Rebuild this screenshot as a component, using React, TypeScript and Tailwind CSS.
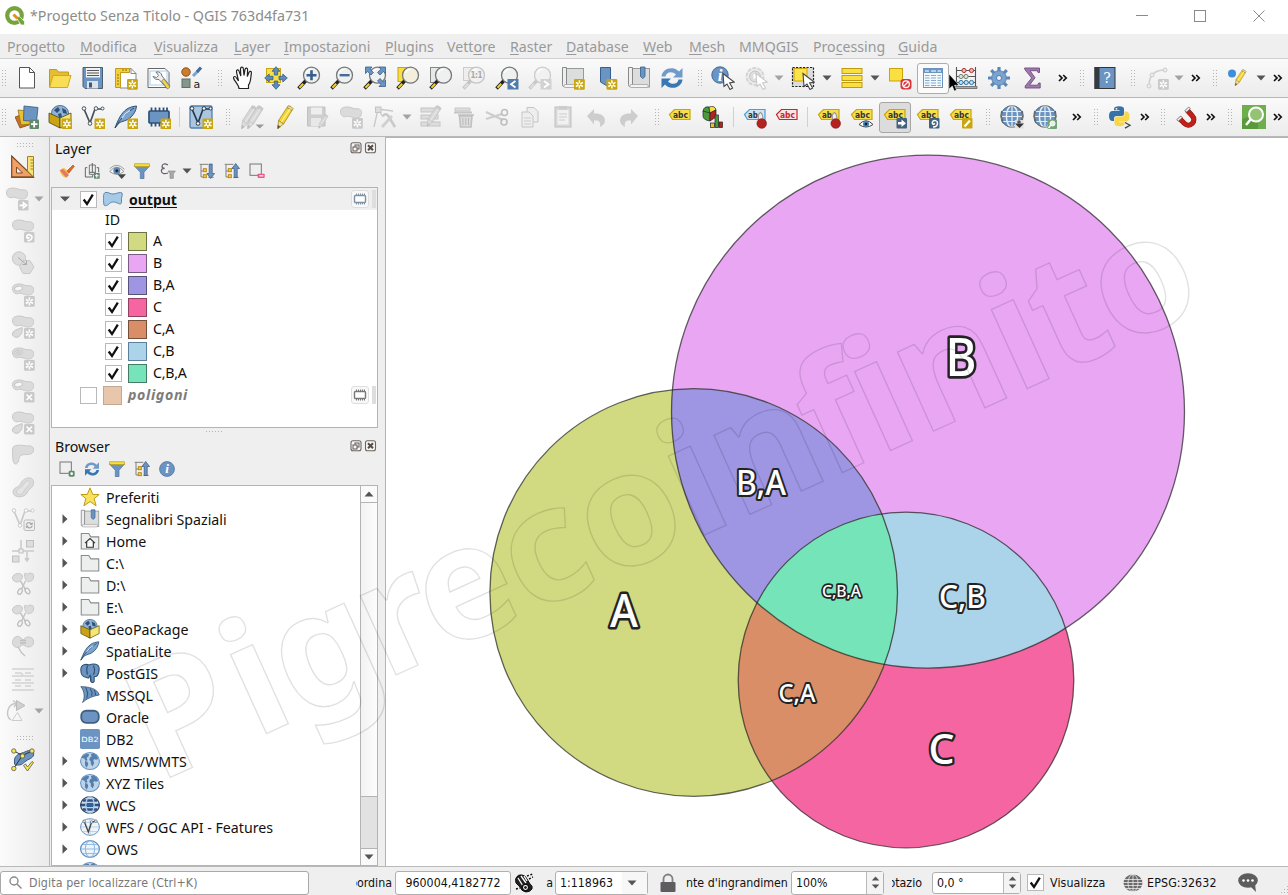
import React from 'react';

type Kids = { children?: React.ReactNode };

const Svg = ({ children, cls = 'h-6 w-6' }: Kids & { cls?: string }) => (
  <svg viewBox="0 0 24 24" className={`${cls} block shrink-0`} fill="none">
    {children}
  </svg>
);

const Cell = ({ children, cls = 'w-[33px]' }: Kids & { cls?: string }) => (
  <div className={`${cls} flex h-full shrink-0 items-center justify-center`}>{children}</div>
);

const Grip = ({ cls }: { cls: string }) => (
  <div className={`${cls} flex h-full shrink-0 items-center`}>
    <svg viewBox="0 0 5 17" className="block h-[17px] w-[5px]">
      {[0, 1, 2, 3, 4, 5].map((i) => (
        <g key={i} fill="#b4b4b4">
          <rect x="0" y={i * 3} width="1" height="1" />
          <rect x="3" y={i * 3} width="1" height="1" />
        </g>
      ))}
    </svg>
  </div>
);

const Sep = ({ cls }: { cls: string }) => (
  <div className={`${cls} flex h-full shrink-0 items-center justify-center`}>
    <div className="h-[20px] w-px bg-[#d0d0d0]" />
  </div>
);

const Arrow = ({ cls, dim }: { cls: string; dim?: boolean }) => (
  <Cell cls={cls}>
    <svg viewBox="0 0 10 6" className="block h-[6px] w-[10px]">
      <path d="M0.5 0.5h9L5 5.5z" fill={dim ? '#a3a3a3' : '#555'} />
    </svg>
  </Cell>
);

const More = ({ cls }: { cls: string }) => (
  <Cell cls={cls}>
    <svg viewBox="0 0 10 8" className="block h-[8px] w-[10px]" fill="none" stroke="#111" strokeWidth="1.7">
      <path d="M1 1l3 3-3 3M5.2 1l3 3-3 3" />
    </svg>
  </Cell>
);

const Star = ({ x = 13, y = 13, c = '#c9a50e' }: { x?: number; y?: number; c?: string }) => (
  <g transform={`translate(${x} ${y})`}>
    <rect width="10.8" height="10.8" rx="1.2" fill={c} />
    <path d="M5.4 1.3v8.2M1.8 3.3l7.200 4.200M9 3.300L1.800 7.500" stroke="#fff" strokeWidth="1.500" />
    <circle cx="5.4" cy="5.4" r="1.100" fill={c} />
  </g>
);

const Mag = ({ c = '#777', h = '#f2cf2a', o = '#222', f = '#eef1f0' }: { c?: string; h?: string; o?: string; f?: string }) => (
  <g>
    <path d="M1.500 22.500l8-8.500" stroke={o} strokeWidth="3.400" />
    <path d="M2.400 21.800l3.800-4" stroke={h} strokeWidth="2" />
    <circle cx="14.500" cy="9.200" r="8" fill={f} stroke={c} strokeWidth="1.300" />
    <path d="M9.500 7a5.500 5.500 0 0 1 5-3.600" stroke="#fff" strokeWidth="1.300" />
  </g>
);

const Globe = ({ a = '#6b94c2', b = '#e4eef7', s = '#41627f' }: { a?: string; b?: string; s?: string }) => (
  <g stroke={s} strokeWidth="0.9">
    <circle cx="12" cy="11.500" r="10.800" fill={a} />
    <path d="M12 1v21.500M2.500 6.500h19M1.500 11.500h21M2.500 16.500h19" stroke={b} strokeWidth="1.200" />
    <ellipse cx="12" cy="11.500" rx="5.600" ry="10.800" stroke={b} strokeWidth="1.500" />
    <path d="M2 6Q0 12 3 18M22 6q2 6-1 12" stroke="#555" strokeWidth="1.500" />
    <circle cx="12" cy="11.500" r="10.800" stroke="#777" />
  </g>
);

const World = ({ s = '#6b94c2' }: { s?: string }) => (
  <g>
    <ellipse cx="12" cy="12" rx="11.300" ry="10.300" fill="#bcd4ea" stroke={s} strokeWidth="1.300" />
    <path
      d="M3 6l5-3 3 1-1 3-2 1 1 3-2 1-2-3-3-1zM6 12l3 1 1 3-2 4-2-3zM13 4l3-1.500 4 3 2 4-3 1-2-1-1 2 1 3-2 4-2-3 0-3-2-2 1-3 2-1z"
      fill="#5580ae"
    />
  </g>
);

const Tag = ({ f = '#f7df4b', s = '#c9a50e', t = '#333', w = 'abc' }: { f?: string; s?: string; t?: string; w?: string }) => (
  <g>
    <path d="M1.500 9.500L6.500 4.500h15.500v10H4.500z" fill={f} stroke={s} strokeWidth="1.200" />
    <text x="5" y="12.600" textLength={w.length * 5} lengthAdjust="spacingAndGlyphs" className="font-['DejaVu_Sans'] text-[9px] font-bold" fill={t}>
      {w}
    </text>
  </g>
);

const Ptr = ({ dim }: { dim?: boolean }) => (
  <path d="M12 7.500l1 13 3-2.500 3 5.500 2.600-1.400-3-5.200 4.600-.8z" fill="#fff" stroke={dim ? '#c9c9c9' : '#444'} strokeWidth="1.100" />
);

const Pin = () => (
  <g>
    <path d="M15.500 14q-1-5 2-6.500 2.500 1.500 2.500 7" fill="#eee" stroke="#999" strokeWidth="1.100" />
    <circle cx="18.700" cy="18.500" r="4.800" fill="#b52222" stroke="#7c1414" strokeWidth=".6" />
  </g>
);

const Refresh = ({ c = '#6f9bcb', d = '#3877b5' }: { c?: string; d?: string }) => (
  <g>
    <path d="M1.500 10.500C2 4.500 8 1 14 2.500c2 .5 3.500 1.500 5 3L22.500 2v9.500H13l3-3C12 4.500 6 6 5.500 10.500z" fill={c} />
    <path d="M22.500 13.500C22 19.500 16 23 10 21.500c-2-.5-3.500-1.500-5-3L1.500 22v-9.500H11l-3 3c4 4 10 2.500 10.500-2z" fill={d} />
  </g>
);

const Polyline = ({ c = '#45505c', n = '#fff' }: { c?: string; n?: string }) => (
  <g stroke={c}>
    <path d="M3 4l6 14 5-14h7" strokeWidth="1.700" />
    <g fill={n} strokeWidth="1">
      <circle cx="3" cy="3.500" r="1.800" />
      <circle cx="9" cy="18.500" r="1.800" />
      <circle cx="15" cy="3.500" r="1.800" />
      <circle cx="21.500" cy="3.500" r="1.500" />
    </g>
  </g>
);

const Pencil = ({ g }: { g?: boolean }) => (
  <g stroke={g ? '#c4c4c4' : '#a08a20'} strokeWidth=".8">
    <path d="M5.500 15.500L14 2.500l5 3L10.500 19z" fill={g ? '#d6d6d6' : '#f3d32f'} />
    <path d="M14 2.500l1.200-1.800q3 0 5 3L19 5.500z" fill={g ? '#cacaca' : '#e8d5a0'} />
    <path d="M5.500 15.500l5 3.500-5.500 4.500z" fill={g ? '#ddd' : '#f0dcae'} />
    <path d="M4.500 23.700l.3-3.500 2.600 1.600z" fill={g ? '#bbb' : '#333'} />
    <path d="M8.300 17L17 4" stroke={g ? '#e8e8e8' : '#fff2a0'} strokeWidth="1.300" />
  </g>
);

const Feather = () => (
  <g>
    <path d="M1 23C4 15 7 8 13 4c3-2 6-2.500 9.500-3C22 6 20 9 17 12c-4 4-9 4-12 6z" fill="#7ba3cf" stroke="#2f4f72" strokeWidth="1" />
    <path d="M1 23C6 14 12 8 20 3" stroke="#2f4f72" strokeWidth="1" />
    <path d="M8 13q3-5 8-7.500" stroke="#d7e6f4" strokeWidth="1.200" />
  </g>
);

const Box = () => (
  <g>
    <ellipse cx="12" cy="8" rx="8.500" ry="7.500" fill="#8fb3d8" stroke="#39597a" strokeWidth=".8" />
    <path d="M6 5l4-3 2 3-3 3zM14 3l4 2 1 4-4-1zM10 9l3-1 1 4-3 1z" fill="#2f4f78" />
    <path d="M1 8l11 5v10L1 17.500z" fill="#caa313" stroke="#4d430f" strokeWidth=".8" />
    <path d="M23 8l-11 5v10l11-5.500z" fill="#f5e572" stroke="#4d430f" strokeWidth=".8" />
  </g>
);

const Book = ({ mark }: { mark?: boolean }) => (
  <g>
    <rect x="5.500" y="2.500" width="17" height="18.500" fill="#dcdddd" stroke="#999" />
    <path d="M1.500 1.500h4v19h-3q-1 0-1-2z" fill="#eee" stroke="#888" />
    <rect x="3" y="18.500" width="18" height="3" rx="1" fill="#f3f3f3" stroke="#999" strokeWidth=".7" />
    {mark && <path d="M13.500 1h4.500v9.500l-2.200 2-2.300-2z" fill="#6b94c2" stroke="#355f8c" strokeWidth=".8" />}
  </g>
);

const Blob = ({ y = 0, hole }: { y?: number; hole?: boolean }) => (
  <g transform={`translate(0 ${y})`}>
    <path
      d="M1.500 6C1 2 5 .8 9 1c3 0 5 2 8 1.800 4-.3 6 1.200 5.500 4.700-.4 4-4 5-7 4.500-3-.5-5-2.500-8-1.500C4 11.500 2 9.500 1.500 6z"
      fill="#dadbda"
      stroke="#c8c9c8"
      strokeWidth="1"
    />
    {hole && <ellipse cx="7.500" cy="5.500" rx="4" ry="2.300" fill="#f8f8f8" stroke="#c4c5c4" transform="rotate(-12 7.500 5.500)" />}
  </g>
);

const GBadge = ({ d }: { d: string }) => (
  <g>
    <rect x="13" y="13" width="10.500" height="10.500" rx="1.500" fill="#c9c9c9" />
    <path d={d} stroke="#fff" strokeWidth="1.700" />
  </g>
);

const Folder = ({ home }: { home?: boolean }) => (
  <g>
    <path d="M1.500 3h9l2.500 4h9.500v14.500H1.500z" fill="#edeeee" stroke="#8b8b8b" strokeWidth="1.300" />
    {home && <path d="M6 14.500l6-5.500 6 5.500M8 13.500v6h8v-6" fill="#fff" stroke="#333" strokeWidth="1.400" />}
  </g>
);

const Chip = ({ c = '#5b6f86', f = '#fff' }: { c?: string; f?: string }) => (
  <g stroke={c}>
    <path d="M4.500 2.500v19M8.500 2.500v19M12.500 2.500v19M16.500 2.500v19M20 2.500v19" strokeWidth="1.800" />
    <rect x="2" y="6" width="20" height="12" rx="1" fill={f} strokeWidth="1.700" />
  </g>
);

const Funnel = () => (
  <g>
    <path d="M1 5h22l-8 9v9.500H9.500V14z" fill="#6b94c2" stroke="#4a719e" strokeWidth="1" />
    <rect x="1" y="1.200" width="22" height="4.300" fill="#f5e03a" stroke="#b0981a" />
  </g>
);

const Tree = ({ up }: { up?: boolean }) => (
  <g>
    <path d="M1 2h13M3 2V21h3M3 12h3M14 21.500h8" stroke="#808080" strokeWidth="1.500" />
    <rect x="6.500" y="8.500" width="4.500" height="4.500" fill="#f7c93b" stroke="#b8860f" strokeWidth="1.400" />
    <rect x="6.500" y="17.500" width="4.500" height="4.500" fill="#f7c93b" stroke="#b8860f" strokeWidth="1.400" />
    {up ? (
      <path d="M17.500 .8l5.800 7.500H19.800v13.500h-4.500V8.300h-3.500z" fill="#6b94c2" stroke="#2f5078" />
    ) : (
      <path d="M17.500 23.200l5.800-7.500H19.800V1.500h-4.500v14.200h-3.500z" fill="#6b94c2" stroke="#2f5078" />
    )}
  </g>
);

const Info = () => (
  <g>
    <circle cx="12" cy="12" r="11.200" fill="#6b94c2" stroke="#41699b" />
    <text x="12" y="18.500" textAnchor="middle" className="font-['Liberation_Serif'] text-[20px] font-bold italic" fill="#fff">
      i
    </text>
  </g>
);

const MainBar = () => (
  <div className="flex h-[38px] items-center bg-linear-to-b from-[#fafafa] to-[#ececec]">
    <Grip cls="w-[10px] pl-[2px]" />
    <Cell>
      <Svg><path d="M4.500 1.500h10l5 5v15.500h-15z" fill="#fff" stroke="#555" /><path d="M14.500 1.500v5h5" stroke="#555" /></Svg>
    </Cell>
    <Cell>
      <Svg>
        <path d="M1.500 21V3.500h7l2 2.500h10v5" fill="#e5bd33" stroke="#c39a1a" />
        <path d="M1.500 21.500l3.500-12h18l-3.500 12z" fill="#f9de55" stroke="#d0a71f" />
      </Svg>
    </Cell>
    <Cell>
      <Svg>
        <path d="M2 1.500h19.500v21H4l-2-2z" fill="#6b94c2" stroke="#4c5d70" />
        <rect x="5" y="2" width="14" height="9.500" fill="#f0f1f1" />
        <path d="M6 4.500h12M6 7h12M6 9.500h12" stroke="#555" />
        <rect x="6" y="15" width="11" height="7.500" fill="#dfe2e4" /><rect x="8" y="16.500" width="3" height="5" fill="#3d5a7a" />
      </Svg>
    </Cell>
    <Cell>
      <Svg>
        <path d="M6 2.500h11l5 5V22H6z" fill="#fff" stroke="#888" />
        <path d="M17 2.500v5h5" stroke="#888" />
        <path d="M1.500 2.500h14v4h-9v15h-5z" fill="#f4cf3c" stroke="#c39a1a" />
        <path d="M3 9h2M3 12h2M3 15h2M3 18h2M9 3v2M12 3v2" stroke="#8c6d0e" />
        <Star />
      </Svg>
    </Cell>
    <Cell>
      <Svg>
        <path d="M1 2.500h17l4 4V21.500H1z" fill="#fff" stroke="#666" />
        <rect x="3" y="5" width="17" height="14" stroke="#a9cdea" />
        <path d="M9 6q5-1 6 4l8 10-3 2.500-8-9q-4 1-6-3l3.500 1 2-2z" fill="#eee" stroke="#777" />
        <path d="M14.500 15l2.500-2 6 8-2.500 2z" fill="#f4d83c" stroke="#777" strokeWidth=".7" />
      </Svg>
    </Cell>
    <Cell>
      <Svg>
        <circle cx="6" cy="6" r="4.200" fill="#cf7c2e" stroke="#875018" />
        <path d="M13 10l5-5" stroke="#7ba3cf" strokeWidth="3" /><path d="M17 6l4-4.500" stroke="#456d98" strokeWidth="3.200" />
        <rect x="2" y="13" width="8" height="8.500" fill="#84978d" stroke="#5f6f67" />
        <text x="13.500" y="22" className="font-['DejaVu_Sans'] text-[11px]" fill="#222">a</text>
      </Svg>
    </Cell>
    <Grip cls="w-[18px] pl-[10px]" />
    <Cell>
      <Svg>
        <path
          d="M8 22.500c0-4-4.500-7-5.500-10.500 0-2 2-2 3 0l2 3L5.500 6c-.4-2.500 2-3 2.600-.8L9.800 10 9.500 3c0-2.500 2.700-2.500 2.900 0l.6 6.500L14 3.500c.4-2.200 2.800-1.800 2.600.5l-.3 6.500 1.600-4c.8-2 2.800-1.200 2.500.6C19.500 12 20 16 17.500 19v3.500z"
          fill="#fff"
          stroke="#222"
          strokeWidth="1.200"
        />
      </Svg>
    </Cell>
    <Cell>
      <Svg>
        <rect x="2.500" y="2.500" width="14" height="14" fill="#f9df3f" stroke="#caa313" />
        <g fill="#5f8bbb" stroke="#355f8c" strokeWidth=".8">
          <path d="M12 .7l4 4.500h-2.300V9h-3.400V5.200H8zM12 23.300l4-4.500h-2.300V15h-3.400v3.800H8zM.7 12l4.500 4v-2.300H9v-3.400H5.200V8zM23.300 12l-4.500 4v-2.300H15v-3.400h3.800V8z" />
        </g>
      </Svg>
    </Cell>
    <Cell><Svg><Mag /><path d="M14.500 4.200v10M9.500 9.200h10" stroke="#355f8c" strokeWidth="2.600" /></Svg></Cell>
    <Cell><Svg><Mag /><path d="M9.600 9.200h10" stroke="#456d98" strokeWidth="2.400" /></Svg></Cell>
    <Cell>
      <Svg>
        <Mag />
        <g fill="#6b94c2" stroke="#355f8c" strokeWidth=".8">
          <path d="M2.500 1h6.500L7 3.200 10.500 6.500 8 9 4.700 5.500 2.500 7.500zM22.500 1H16l2 2.200-3.500 3.300L17 9l3.300-3.500 2.200 2zM22.500 20.500H16l2-2.200-3.500-3.300L17 12.500l3.300 3.500 2.200-2z" />
        </g>
      </Svg>
    </Cell>
    <Cell>
      <Svg><rect x="2" y="1.500" width="12" height="14" fill="#f9df3f" stroke="#caa313" /><Mag f="#f3efdc" /></Svg>
    </Cell>
    <Cell><Svg><rect x="1.500" y="1.500" width="12" height="15" fill="#e8e8e8" stroke="#888" /><Mag /></Svg></Cell>
    <Cell>
      <Svg>
        <rect x="1.500" y="1.500" width="12" height="13" fill="#eee" stroke="#ccc" />
        <Mag c="#c4c4c4" h="#ddd" o="#c4c4c4" f="#f1f1f1" />
        <text x="8.500" y="12" textLength="12" className="font-['DejaVu_Sans_Condensed'] text-[8px] font-bold" fill="#a8a8a8">1:1</text>
      </Svg>
    </Cell>
    <Cell>
      <Svg><Mag /><rect x="12.500" y="13" width="11" height="10.500" fill="#4f7cad" /><path d="M20.500 15l-4.500 3.300 4.500 3.300" stroke="#fff" strokeWidth="1.800" /></Svg>
    </Cell>
    <Cell>
      <Svg><Mag c="#ccc" h="#ddd" o="#c8c8c8" f="#f1f1f1" /><rect x="12.500" y="13" width="11" height="10.500" fill="#d2d2d2" /><path d="M16 15l4.500 3.300-4.500 3.300" stroke="#fff" strokeWidth="1.800" /></Svg>
    </Cell>
    <Cell><Svg><Book /><Star /></Svg></Cell>
    <Cell><Svg><path d="M6.500 1.500h10V21l-5-2-5-3z" fill="#6b94c2" stroke="#355f8c" /><Star x={12.5} /></Svg></Cell>
    <Cell><Svg><Book mark /></Svg></Cell>
    <Cell><Svg><Refresh /></Svg></Cell>
    <Grip cls="w-[18px] pl-[10px]" />
    <Cell>
      <Svg>
        <circle cx="9" cy="9" r="8.200" fill="#6b94c2" stroke="#41699b" />
        <text x="9" y="14.500" textAnchor="middle" className="font-['Liberation_Serif'] text-[17px] font-bold italic" fill="#fff">i</text>
        <Ptr />
      </Svg>
    </Cell>
    <Cell>
      <Svg>
        <circle cx="11" cy="10.500" r="8.500" fill="#ececec" stroke="#d4d4d4" strokeWidth="2" strokeDasharray="4 1.300" />
        <circle cx="11" cy="10.500" r="5.500" fill="#ddd" stroke="#c4c4c4" /><path d="M9.500 7.500v6l4.500-3z" fill="#fff" /><Ptr dim />
      </Svg>
    </Cell>
    <Arrow cls="w-[14px]" dim />
    <Cell>
      <Svg>
        <rect x="1.500" y="1.500" width="21" height="19" fill="#dcdcdc" stroke="#222" strokeWidth="1.200" strokeDasharray="2.200 1.300" />
        <rect x="3" y="2.500" width="13" height="12.500" fill="#fbe34a" stroke="#caa313" /><Ptr />
      </Svg>
    </Cell>
    <Arrow cls="w-[16px]" />
    <Cell>
      <Svg>
        <g fill="#f9df3f" stroke="#c09a10"><rect x="2" y="2.500" width="20" height="5" /><rect x="2" y="9.500" width="20" height="5" /><rect x="2" y="16.500" width="20" height="5" /></g>
      </Svg>
    </Cell>
    <Arrow cls="w-[14px]" />
    <Cell cls="w-[34px] pl-[2px]">
      <Svg>
        <rect x="1.500" y="2.500" width="13" height="12.500" fill="#f9df3f" stroke="#caa313" />
        <rect x="12.500" y="13" width="11" height="10.500" rx="3" fill="#d8343a" /><circle cx="18" cy="18.200" r="3.300" stroke="#fff" strokeWidth="1.300" /><path d="M15.500 20.500l5-5" stroke="#fff" strokeWidth="1.300" />
      </Svg>
    </Cell>
    <Cell>
      <div className="flex h-[31px] w-[32px] shrink-0 items-center justify-center rounded-[3px] border border-[#adadad] bg-[#fbfbfb]">
        <Svg>
          <rect x="2.500" y="2.500" width="19" height="19" fill="#f3f8fc" stroke="#6b94c2" /><rect x="3" y="3" width="18" height="4" fill="#6b94c2" />
          <path d="M4 9.500h4.500M10 9.500h5M16.500 9.500H20M4 12h4.500M10 12h5M16.500 12H20M4 14.500h4.500M10 14.500h5M16.500 14.500H20M4 17h4.500M10 17h5M16.500 17H20M4 19.500h4.500M10 19.500h5M16.500 19.500H20" stroke="#86abd0" strokeWidth="1.200" /><path d="M4 5h4M10 5h5M16.500 5H20" stroke="#cfe3f4" strokeWidth="1.300" />
        </Svg>
      </div>
    </Cell>
    <Cell>
      <Svg>
        <path d="M2.500 1v19M21.500 1v19M2 4.500h20M2 10.500h20M2 16.500h20" stroke="#555" strokeWidth="1.100" /><path d="M1 20.500h22v2H1z" fill="#aaa" stroke="#555" strokeWidth=".7" />
        <g fill="#f3b1b1" stroke="#b03232"><circle cx="10" cy="4.500" r="2.100" /><circle cx="17.500" cy="4.500" r="2.100" /></g>
        <g fill="#dde4dd" stroke="#718071"><circle cx="7" cy="10.500" r="2.100" /><circle cx="12" cy="10.500" r="2.100" /></g>
        <g fill="#bfe0f4" stroke="#2f75a5"><circle cx="7" cy="16.500" r="2.100" /><circle cx="12.200" cy="16.500" r="2.100" /><circle cx="17.500" cy="16.500" r="2.100" /></g>
      </Svg>
    </Cell>
    <Cell>
      <Svg>
        <path d="M12 1v22M1 12h22M4.200 4.200l15.600 15.600M19.800 4.200L4.200 19.800" stroke="#5b88b8" strokeWidth="3.200" /><circle cx="12" cy="12" r="7.300" fill="#7ba3cf" stroke="#5b88b8" /><circle cx="12" cy="12" r="2.500" fill="#f4f4f4" stroke="#4f7cad" />
      </Svg>
    </Cell>
    <Cell>
      <Svg><path d="M4.500 2h15v4.500h-1.500l-.8-1.800H10l5 7-5.500 7.500h8l1.200-2.200h1.500V22h-15v-2l6.500-8-6.500-8z" fill="#a07aae" stroke="#6d4d7b" strokeWidth=".9" /></Svg>
    </Cell>
    <More cls="w-[29px]" />
    <Grip cls="w-[11px] pl-[3px]" />
    <Cell>
      <Svg>
        <rect x="2" y="1.500" width="20" height="21" fill="#6b94c2" stroke="#333" /><rect x="1.500" y="1" width="5" height="22" fill="#343a42" />
        <text x="14" y="17" textAnchor="middle" className="font-['DejaVu_Serif'] text-[14px]" fill="#fff">?</text>
      </Svg>
    </Cell>
    <Grip cls="w-[19px] pl-[10px]" />
    <Cell>
      <Svg>
        <path d="M4 20C4 9 9 4 20 4" stroke="#d0d0d0" strokeWidth="1.500" />
        <g fill="#eee" stroke="#ccc"><circle cx="4" cy="20" r="2" /><circle cx="7" cy="9" r="2" /><circle cx="20" cy="4" r="2" /></g><Star c="#c9c9c9" />
      </Svg>
    </Cell>
    <Arrow cls="w-[12px]" dim />
    <More cls="w-[22px]" />
    <Grip cls="w-[14px] pl-[6px]" />
    <Cell>
      <Svg>
        <circle cx="6" cy="7.500" r="4" fill="#3f8fd8" /><g transform="translate(6 3) scale(.7)"><Pencil /></g>
      </Svg>
    </Cell>
    <Arrow cls="w-[14px]" />
    <More cls="w-[20px]" />
  </div>
);

const EditBar = () => (
  <div className="flex h-[38px] items-center bg-linear-to-b from-[#fafafa] to-[#ececec]">
    <Grip cls="w-[10px] pl-[2px]" />
    <Cell>
      <Svg>
        <path d="M0 12l11-4 3 12-9 3z" fill="#c96f28" stroke="#8d4e16" strokeWidth=".8" /><path d="M3 5l12 1 1 13-10 1z" fill="#eac033" stroke="#8d7216" strokeWidth=".8" />
        <path d="M9 1l14 1.500-1.500 14-13-1z" fill="#6b94c2" stroke="#39597a" strokeWidth=".8" />
        <rect x="14.500" y="14.500" width="9.500" height="9.500" rx="1" fill="#61876c" /><path d="M19.200 16v6.500M16 19.200h6.500" stroke="#fff" strokeWidth="1.800" />
      </Svg>
    </Cell>
    <Cell><Svg><Box /><Star x={13.5} y={13.5} /></Svg></Cell>
    <Cell><Svg><Polyline /><Star x={13.5} y={13.5} /></Svg></Cell>
    <Cell><Svg><Feather /><Star x={13.5} y={13.5} /></Svg></Cell>
    <Cell><Svg><Chip c="#2f5078" f="#6b94c2" /><Star x={13.5} y={13.5} /></Svg></Cell>
    <Sep cls="w-[9px]" />
    <Cell>
      <Svg><rect x="1" y="1" width="22" height="22" rx="1.500" fill="#a9c5e0" stroke="#5580ae" strokeWidth="1.300" /><Polyline c="#26384a" /><Star x={13.5} y={13.5} /></Svg>
    </Cell>
    <Grip cls="w-[18px] pl-[9px]" />
    <Cell>
      <Svg><g transform="translate(-3 0)"><Pencil g /></g><g transform="translate(3 0)"><Pencil g /></g><path d="M15.500 19.500h8.500l-4.200 4z" fill="#999" /></Svg>
    </Cell>
    <Cell><Svg><Pencil /></Svg></Cell>
    <Cell>
      <Svg><path d="M1.500 2h17.500v19H1.500z" fill="#cfcfcf" stroke="#c0c0c0" /><rect x="5" y="2.500" width="11" height="7" fill="#eee" /><rect x="5" y="13" width="10" height="8" fill="#e8e8e8" /><g transform="translate(10 9) scale(.6)"><Pencil g /></g></Svg>
    </Cell>
    <Cell><Svg><Blob y={1} /><Star c="#c9c9c9" /></Svg></Cell>
    <Cell>
      <Svg><path d="M2 22L6 4l15 2M6 4l5 8" stroke="#c8c8c8" strokeWidth="1.300" /><rect x="3.500" y="2" width="5.500" height="5.500" fill="#ddd" stroke="#c4c4c4" /><path d="M11 11q3-4 6 1l6 10" stroke="#c9c9c9" strokeWidth="2.600" /><path d="M20 11L10 22" stroke="#d0d0d0" strokeWidth="2.800" /></Svg>
    </Cell>
    <Arrow cls="w-[14px]" dim />
    <Cell>
      <Svg><g fill="#ddd" stroke="#c4c4c4"><rect x="2" y="3" width="17" height="4" /><rect x="2" y="10" width="17" height="4" /><rect x="2" y="17" width="19" height="4" /></g><g transform="translate(4 0) scale(.9)"><Pencil g /></g></Svg>
    </Cell>
    <Cell>
      <Svg><path d="M3 3h15v3H3z" fill="#ddd" stroke="#c8c8c8" /><path d="M2 7.500h18" stroke="#c4c4c4" strokeWidth="2" /><path d="M6 10h16M7.500 11l1 11h10.500l1-11z" fill="#dcdcdc" stroke="#c0c0c0" strokeWidth="1.600" /><path d="M11 13v7M13.800 13v7M16.500 13v7" stroke="#bbb" /></Svg>
    </Cell>
    <Cell>
      <Svg><path d="M1 7l17 8M1 14l16-5" stroke="#cdcdcd" strokeWidth="2.200" /><circle cx="19.500" cy="7.500" r="3" stroke="#bdbdbd" strokeWidth="1.500" /><circle cx="19" cy="17" r="3" stroke="#bdbdbd" strokeWidth="1.500" /></Svg>
    </Cell>
    <Cell>
      <Svg><g fill="#eee" stroke="#c4c4c4"><path d="M9 2.500h7l4 4V17H9z" /><path d="M4 7h7l4 4v11H4z" /></g><path d="M6 13h7M6 16h7M6 19h7" stroke="#ccc" /></Svg>
    </Cell>
    <Cell>
      <Svg><rect x="4" y="2" width="16" height="20" fill="#d8d8d8" stroke="#c0c0c0" /><rect x="6.500" y="5" width="11" height="14.500" fill="#f1f1f1" /><rect x="8" y="1" width="8" height="3.500" fill="#ccc" /><path d="M8 9h8M8 12h8M8 15h6" stroke="#ccc" /></Svg>
    </Cell>
    <Cell><Svg><path d="M3 11l7-7v4.500c6-.5 11 2 11 7 0 3-2 5-5 6.500 1-5.500-1-7-6-6.500v4z" fill="#cdcdcd" /></Svg></Cell>
    <Cell><Svg><path d="M21 11l-7-7v4.500c-6-.5-11 2-11 7 0 3 2 5 5 6.500-1-5.500 1-7 6-6.500v4z" fill="#cdcdcd" /></Svg></Cell>
    <Grip cls="w-[18px] pl-[10px]" />
    <Cell><Svg><Tag /></Svg></Cell>
    <Cell>
      <Svg><path d="M2 6q1-5 6-4l1 5-4 4z" fill="#4a9a3c" stroke="#222" strokeWidth=".7" /><path d="M8 2q6-2 7 3l-6 3z" fill="#f9df3f" stroke="#222" strokeWidth=".7" /><path d="M2 6l7 2v8q-7-1-7-5z" fill="#4a9a3c" stroke="#222" strokeWidth=".7" /><path d="M15 5v7l-6 4V8z" fill="#b52222" stroke="#222" strokeWidth=".7" /><rect x="9.500" y="18" width="4" height="4.500" fill="#eac033" stroke="#222" strokeWidth=".7" /><rect x="14" y="10" width="3.500" height="12.500" fill="#4a9a3c" stroke="#222" strokeWidth=".7" /><rect x="18" y="17" width="3.500" height="5.500" fill="#b52222" stroke="#222" strokeWidth=".7" /></Svg>
    </Cell>
    <Sep cls="w-[9px]" />
    <Cell><Svg><Tag f="#cfe5f6" s="#4a9fd7" w="ab" /><Pin /></Svg></Cell>
    <Cell cls="w-[31px]"><Svg><Tag f="#fbe4e4" s="#c8252c" t="#c8252c" /></Svg></Cell>
    <Sep cls="w-[10px]" />
    <Cell><Svg><Tag w="ab" /><Pin /></Svg></Cell>
    <Cell>
      <Svg><Tag /><path d="M9 19.500q7-7.500 14 0-7 5-14 0z" fill="#fff" stroke="#444" /><circle cx="16" cy="19" r="3" fill="#3f7fb5" /><circle cx="16" cy="19" r="1.200" fill="#111" /></Svg>
    </Cell>
    <Cell>
      <div className="flex h-[31px] w-[32px] shrink-0 items-center justify-center rounded-[3px] border border-[#a6a6a6] bg-[#dcdcdc]">
        <Svg><Tag /><rect x="13.500" y="13" width="10.500" height="10.500" rx="1" fill="#41617f" /><path d="M15 17h3.500v-2.500l4.500 3.800-4.500 3.700v-2.500H15z" fill="#fff" /></Svg>
      </div>
    </Cell>
    <Cell><Svg><Tag /><rect x="13" y="13" width="10.500" height="10.500" rx="1" fill="#41617f" /><path d="M17 22c3 0 4.500-1.500 4.500-4s-4-3.500-5-1 2 3 2 1" stroke="#fff" strokeWidth="1.500" /></Svg></Cell>
    <Cell><Svg><Tag /><rect x="13" y="13" width="10.500" height="10.500" rx="1" fill="#c9a50e" /><path d="M15.500 21.500l5.500-6" stroke="#fff" strokeWidth="2.200" /></Svg></Cell>
    <Grip cls="w-[18px] pl-[9px]" />
    <Cell><Svg><Globe /><path d="M15 15h8.500v8.500H15z" fill="#e0e0e0" /><path d="M15 18.500h9l-4.500 4.500z" fill="#333" /><circle cx="19" cy="17" r="1.800" fill="#555" /></Svg></Cell>
    <Cell><Svg><Globe /><rect x="14.500" y="14.500" width="9.500" height="9.500" rx="1" fill="#71a374" /><circle cx="19.500" cy="18.500" r="2.500" fill="#e4f0e4" stroke="#fff" /><path d="M17.500 20.500l-2 2.500" stroke="#fff" strokeWidth="1.500" /></Svg></Cell>
    <More cls="w-[31px]" />
    <Grip cls="w-[11px] pl-[2px]" />
    <Cell>
      <Svg>
        <path d="M6 4q0-2.700 5-2.700T16 4v4.500q0 2.500-2.500 2.500h-5Q6 11 6 13.500V16H4q-3-.5-3-5t3-5h7.500v-.8H6z" fill="#3672a8" />
        <path d="M16.500 18.500q0 2.700-5 2.700T6.500 18.500V14q0-2.500 2.500-2.500h5q2.500 0 2.500-2.500V6.500h2q3 .5 3 5t-3 5H11v.8h5.500z" fill="#f8d648" /><circle cx="8.500" cy="3.800" r=".9" fill="#fff" />
        <path d="M17 17.500l5 2.800-5 2.800" stroke="#444" strokeWidth="1.300" />
      </Svg>
    </Cell>
    <More cls="w-[17px]" />
    <Grip cls="w-[17px] pl-[8px]" />
    <Cell>
      <Svg><path d="M4 13l5.500 5.500a5 5 0 0 0 7.700-7.700L12 5" stroke="#7c1414" strokeWidth="5.200" /><path d="M4 13l5.500 5.500a5 5 0 0 0 7.700-7.700L12 5" stroke="#c02018" strokeWidth="4.200" /><path d="M1.800 14.500l4-3.500 1.500 1.700-4 3.500zM9.800 5.500l4-3.500 1.500 1.700-4 3.500z" fill="#f4f4f4" stroke="#555" strokeWidth=".7" /></Svg>
    </Cell>
    <More cls="w-[16px]" />
    <Grip cls="w-[18px] pl-[9px]" />
    <Cell>
      <Svg><rect width="24" height="24" fill="#6fae4c" /><path d="M0 24V14l6-2 10 6v6z" fill="#5a9a3d" /><path d="M4 20l5-6" stroke="#fff" strokeWidth="2.500" /><circle cx="14" cy="9.500" r="7" fill="#93c473" stroke="#fff" strokeWidth="2" /></Svg>
    </Cell>
    <More cls="w-[16px]" />
  </div>
);

const ARROW_R = 'M14.500 18.300h4v-2.500l3 2.500-3 2.500v-2.500';
const CROSS = 'M15.500 15.500l5.500 5.500M21 15.500L15.500 21';
const SWIRL = 'M16.500 21.500c3 .5 4.500-1.500 4.500-3.500s-4-3.500-5-1 2 3 2 1';

const Scissors = () => (
  <>
    <path d="M1.500 7c0-5 9-6 10-2 0 3-3 6-5 6s-5-1-5-4zM13.500 3c1-2 2 0 3 0s2-2 3.500-.5C22 2 23 4 22.500 6c0 4-4 5-6 4.500S13.500 6 13.500 3z" fill="#dadbda" stroke="#c8c9c8" />
    <path d="M9.500 10l5 8.500M14.500 10l-4 8" stroke="#c4c4c4" strokeWidth="1.500" />
    <ellipse cx="9" cy="20.500" rx="2" ry="3" transform="rotate(25 9 20.500)" stroke="#bbb" strokeWidth="1.300" />
    <ellipse cx="16.500" cy="20" rx="2" ry="3" transform="rotate(-35 16.500 20)" stroke="#bbb" strokeWidth="1.300" />
  </>
);

const Drop = () => <path d="M11 12.500c1 4-1 8-4 9.500-2.500 1-5.500-.5-5.500-3 0-3.500 5-4.500 9.500-6.500z" fill="#dadbda" stroke="#c4c5c4" />;

const sideIcons: React.ReactNode[] = [
  <><Blob /><GBadge d={SWIRL} /></>,
  <g fill="#dcdddc" stroke="#c8c9c8"><circle cx="8" cy="7.500" r="6.700" /><path d="M8.500 16l3.500-6.500h7l4 6.500-4 6.500h-7z" /><path d="M7 6.500l8.500 7m0-4v4h-4" stroke="#aaa" fill="none" /></g>,
  <><Blob hole /><Star c="#c9c9c9" /></>,
  <><Blob /><Drop /><Star c="#c9c9c9" /></>,
  <><Blob hole /><ellipse cx="7.500" cy="5.500" rx="3.200" ry="1.900" fill="#d0d0d0" transform="rotate(-12 7.500 5.500)" /><Star c="#c9c9c9" /></>,
  <><Blob hole /><GBadge d={CROSS} /></>,
  <><Blob /><Drop /><GBadge d={CROSS} /></>,
  <path d="M1.500 6c0-5 10-4 15-3 4-.5 6 .5 6 4s-4 5-8 4.500c-4 0-6 1-6.500 4-.5 4-2 5.500-3.500 5.500-3 0-3-8-3-15z" fill="#dadbda" stroke="#c8c9c8" />,
  <><path d="M2 17c0-5 6-4 8-9 2-5 12-8 12.500-1 .3 6-4 6-6 10-2 6-14 7-14.500 0z" fill="#dadbda" stroke="#c8c9c8" /><path d="M5.500 17c0-4 5-3 8-9 2-3 6-3 5.500.5-2 4-5 4.500-6 7.500-1 4-7 5-7.500 1z" fill="#e3e4e3" stroke="#cfcfcf" /></>,
  <><Polyline c="#c9c9c9" /><rect x="13" y="13" width="10.500" height="10.500" rx="1.500" fill="#f0f0f0" stroke="#bbb" /><g transform="translate(14.300 14.300) scale(.33)"><Refresh c="#aaa" d="#aaa" /></g></>,
  <><path d="M10 1v12M1 12h22M16 13v8M14 19l2 3 2-3" stroke="#c9c9c9" strokeWidth="1.500" /><rect x="8" y="10" width="4" height="4" fill="#eee" stroke="#c0c0c0" /><rect x="15.500" y="1.500" width="7" height="6.500" fill="#ddd" stroke="#c0c0c0" /><rect x="1.500" y="17" width="6.500" height="6" fill="#ddd" stroke="#c0c0c0" /></>,
  <Scissors />,
  <Scissors />,
  <><path d="M1.500 7.500c0-7 8-8 9.500-3h2c1.500-4 10-3.500 9.500 2.500 0 6-7 6-9.500 3h-2c-3 4-9.500 3-9.500-2.500z" fill="#dadbda" stroke="#c8c9c8" /><path d="M9 5.500h6M9 8h6M7 12q3 6 7 9" stroke="#bfbfbf" strokeWidth="1.300" /></>,
  <path d="M1 2h22M1 9h22M1 16h22M1 23h22M4 6h6l2 2M20 6h-6M4 13h6M20 13h-6M4 19h6M20 19h-6" stroke="#d2d2d2" strokeWidth="1.300" />,
];

const SideCell = ({ children }: Kids) => <div className="flex h-8 shrink-0 items-center pl-[11px]">{children}</div>;

const DotRow = () => (
  <svg viewBox="0 0 17 4" className="block h-1 w-[17px]">
    {[0, 1, 2, 3, 4, 5].map((i) => (
      <g key={i} fill="#b4b4b4"><rect x={i * 3} y="0" width="1" height="1" /><rect x={i * 3} y="3" width="1" height="1" /></g>
    ))}
  </svg>
);

const SideGrip = ({ cls }: { cls: string }) => (
  <div className={`${cls} shrink-0 pl-[17px]`}>
    <DotRow />
  </div>
);

const SideBar = () => (
  <div className="flex w-[50px] shrink-0 flex-col border-r border-[#b9b9b9] bg-linear-to-r from-[#fbfbfb] to-[#ebebeb]">
    <SideGrip cls="h-[14px] pt-[6px]" />
    <SideCell>
      <Svg><path d="M0.700 22V1l22 21z" fill="#f0a068" stroke="#7b4a22" strokeWidth="1.200" /><path d="M5.500 18v-6l6 6z" fill="#f6f6f6" stroke="#7b4a22" /><path d="M16.500 1.500h6v20.500l-6-6z" fill="#f8e27a" stroke="#a3831a" /><path d="M19.500 5h3M19.500 8h3M19.500 11h3M19.500 14h3" stroke="#a3831a" /><path d="M0 22.300h23" stroke="#7b4a22" strokeWidth="1.300" /></Svg>
    </SideCell>
    <div className="flex h-8 shrink-0 items-center pl-[5px]">
      <Svg><Blob /><GBadge d={ARROW_R} /></Svg>
      <Arrow cls="w-[20px]" dim />
    </div>
    {sideIcons.map((ic, i) => (
      <SideCell key={i}><Svg>{ic}</Svg></SideCell>
    ))}
    <div className="flex h-8 shrink-0 items-center pl-[5px]">
      <Svg><path d="M6 21C0 17 2 5 11 4.500M8 1.500L12 4.500 9 8" stroke="#c6c6c6" strokeWidth="1.400" /><path d="M11.500 1.500v10L20 6.500z" fill="#cdd2cd" stroke="#bbb" /><path d="M7 21.500h10l-4.500-8z" stroke="#ccc" /></Svg>
      <Arrow cls="w-[20px]" dim />
    </div>
    <SideGrip cls="h-[17px] pt-[9px]" />
    <SideCell>
      <Svg><path d="M3.500 15C3 9 5 7 11 5c4-1 9-5 11.500-1 1 5-2 6-6 8s-5 5-8 5-5 1-5-2z" fill="#6b94c2" stroke="#39597a" /><path d="M3 3l8.500 4.500L21 3M11 8L3 20" stroke="#333" /><g fill="#f9ea4b" stroke="#555" strokeWidth=".8"><circle cx="2.800" cy="3" r="2.200" /><circle cx="21" cy="3" r="2.200" /><circle cx="11.500" cy="8" r="2.200" /><circle cx="2.800" cy="20.500" r="2.200" /><path d="M12.500 17.500l2-1.500 2 3L21 13.500l1.500 1-6 8.500z" /></g></Svg>
    </SideCell>
  </div>
);

const PanelTitle = ({ name }: { name: string }) => (
  <div className="flex h-[21px] items-center pr-[8px] pl-[4px]">
    <span className="flex-1 pt-[1px] text-[14.2px] leading-[19px]">{name}</span>
    <svg viewBox="0 0 27 12" className="block h-3 w-[27px]" fill="none" stroke="#6d6560" strokeWidth="1.100">
      <rect x="1" y=".8" width="10" height="10" rx="2" fill="#f6f6f6" /><rect x="5" y="3" width="4" height="4" /><rect x="3" y="5" width="4" height="4" fill="#f6f6f6" />
      <rect x="15.500" y=".8" width="10" height="10" rx="2" fill="#f6f6f6" /><path d="M18 3.300l5 5M23 3.300l-5 5" stroke="#544c44" strokeWidth="2" />
    </svg>
  </div>
);

const Check = ({ on = true }: { on?: boolean }) => (
  <div className="h-[17px] w-[17px] shrink-0 border border-[#b9b9b9] bg-white">
    {on && (
      <svg viewBox="0 0 15 15" className="block h-[15px] w-[15px]" fill="none" stroke="#111" strokeWidth="2.300">
        <path d="M2.700 7.500l3.300 4.500L11.800 2.700" />
      </svg>
    )}
  </div>
);

const MemBadge = ({ c }: { c: string }) => (
  <div className="flex items-center">
    <div className="flex h-[18px] w-[18px] items-center justify-center rounded-[3px] border border-[#dedede] bg-[#f8f8f8]">
      <svg viewBox="0 0 14 12" className="block h-3 w-[14px]" fill="none" stroke={c}>
        <path d="M3.500 .5v11M5.500 .5v11M7.500 .5v11M9.500 .5v11M11.500 .5v11" />
        <rect x="1.500" y="2.500" width="11" height="7" fill="#fff" strokeWidth="1.400" rx="1" />
      </svg>
    </div>
    <div className="ml-[3px] h-[18px] w-1 bg-[#dedede]" />
  </div>
);

const classes = [
  { n: 'A', c: 'bg-[#d1da80] border-[#6e7346]' },
  { n: 'B', c: 'bg-[#e8a6f3] border-[#7a5a80]' },
  { n: 'B,A', c: 'bg-[#9e95e3] border-[#585478]' },
  { n: 'C', c: 'bg-[#f565a1] border-[#92405f]' },
  { n: 'C,A', c: 'bg-[#da8e67] border-[#74503d]' },
  { n: 'C,B', c: 'bg-[#abd4ea] border-[#5c7f9b]' },
  { n: 'C,B,A', c: 'bg-[#76e4b9] border-[#457b66]' },
];

const LayerPanel = () => (
  <div className="flex h-[291px] flex-col">
    <PanelTitle name="Layer" />
    <div className="flex h-[29px] items-center pb-[3px] pl-[8px]">
      <Svg cls="h-4 w-4"><path d="M1 11l6-4 9 7-7 8q-5-1-8-11z" fill="#f4c33a" /><path d="M1 11l5-2 9 9-4 4z" fill="#e4776a" /><path d="M12 12l9-9 2 2-8 10z" fill="#d86a2d" stroke="#b3521c" /></Svg>
      <Svg cls="ml-[9px] h-4 w-4"><path d="M8 3h9v14H8z" stroke="#777" strokeWidth="1.500" /><path d="M5 7H2v14h11v-3M12.500 0v14M8 14h9M19 7h3v7" stroke="#666" strokeWidth="1.500" /><rect x="15" y="15" width="8.500" height="8.500" fill="#61876c" /><path d="M19.200 16.500v5.500M16.500 19.200h5.500" stroke="#fff" strokeWidth="1.600" /></Svg>
      <Svg cls="ml-[9px] h-[17px] w-[17px]"><path d="M1 12Q11 0 21 12 11 20 1 12z" fill="#fff" stroke="#888" strokeWidth="1.300" /><path d="M1 8Q11-2 22 9" stroke="#999" strokeWidth="1.300" /><circle cx="11" cy="11" r="5" fill="#5d87b5" /><circle cx="11" cy="11" r="2" fill="#222" /><path d="M12 16h12l-6 6.500z" fill="#444" /></Svg>
      <Svg cls="ml-[8px] h-4 w-4"><Funnel /></Svg>
      <Svg cls="ml-[10px] h-4 w-4"><path d="M12 3Q4-1 3 5q0 3 4 3-5 0-5 4 1 6 10 3" stroke="#6a5a6a" strokeWidth="1.800" /><path d="M12 12h11l-3 4v7h-5v-7z" fill="#aaa" stroke="#888" /></Svg>
      <Arrow cls="w-[22px]" />
      <Svg cls="ml-[1px] h-4 w-4"><Tree /></Svg>
      <Svg cls="ml-[9px] h-4 w-4"><Tree up /></Svg>
      <Svg cls="ml-[9px] h-4 w-4"><rect x="1.500" y="1.500" width="17" height="17" stroke="#777" strokeWidth="1.500" /><rect x="13" y="16" width="10.500" height="6.500" rx="1" fill="#e8588f" /><path d="M15.500 19.200h6" stroke="#fff" strokeWidth="1.800" /></Svg>
    </div>
    <div className="h-[241px] w-[327px] border border-[#b4b4b4] bg-white">
      <div className="flex h-[22px] items-center bg-[#efefef] pr-[1px] pl-[8px]">
        <svg viewBox="0 0 10 6" className="mr-[10px] block h-[6px] w-[10px]"><path d="M0 .5h10L5 5.500z" fill="#555" /></svg>
        <Check />
        <svg viewBox="0 0 20 16" className="mr-[6px] ml-[6px] block h-4 w-5"><path d="M1 14C0 8 0 3 2 1.500c3-1 5 2 9 1.500 3-.5 6-2.500 8-1 1 2-1 4-.5 8 .2 3-1 3.500-3 2.500-4-2-7-2-9 0C4.500 14.500 2 15.500 1 14z" fill="#a5cae8" stroke="#5a87b3" /></svg>
        <span className="flex-1 pt-px text-[14px] leading-5 font-bold underline underline-offset-2">output</span>
        <MemBadge c="#8090a5" />
      </div>
      <div className="flex h-[20px] items-center pl-[53px] text-[14.2px] leading-5">ID</div>
      {classes.map((k) => (
        <div key={k.n} className="flex h-[22px] items-center pl-[53px]">
          <Check />
          <div className={`${k.c} mr-[6px] ml-[6px] h-[19px] w-[19px] border`} />
          <span className="text-[14.2px] leading-5 tracking-[-0.2px]">{k.n}</span>
        </div>
      ))}
      <div className="flex h-[22px] items-center pr-[1px] pl-[28px]">
        <Check on={false} />
        <div className="mr-[6px] ml-[6px] h-[19px] w-[19px] border border-[#c2a791] bg-[#e7c6ac]" />
        <span className="flex-1 text-[14.2px] leading-5 font-bold tracking-[0.65px] text-[#7c7c7c] italic">poligoni</span>
        <MemBadge c="#777" />
      </div>
    </div>
  </div>
);

const Nodes: { n: string; leaf?: boolean; i: React.ReactNode }[] = [
  { n: 'Preferiti', leaf: true, i: <path d="M12 1l3.300 8H23l-6 5 2.300 8.500L12 17.500l-7.300 5L7 14 1 9h7.700z" fill="#f8e15c" stroke="#bd9a14" strokeWidth="1.200" /> },
  { n: 'Segnalibri Spaziali', i: <Book mark /> },
  { n: 'Home', i: <Folder home /> },
  { n: 'C:\\', i: <Folder /> },
  { n: 'D:\\', i: <Folder /> },
  { n: 'E:\\', i: <Folder /> },
  { n: 'GeoPackage', i: <Box /> },
  { n: 'SpatiaLite', i: <Feather /> },
  { n: 'PostGIS', i: <><path d="M1 8C1 1 8 1 11 2.500 16 0 23 1 23 7c0 4-1 7-3 9l-3 .5V22q-2 3-4 0l-1-7-2 3-3-1C3 17 1 13 1 8z" fill="#6b94c2" stroke="#2f4f72" strokeWidth="1.300" /><path d="M9 3q-2 6 0 11M16 3q3 6 0 11M13 15v7" stroke="#2f4f72" strokeWidth="1.300" /></> },
  { n: 'MSSQL', leaf: true, i: <><path d="M1 2c9 0 20 2 22 10C16 13 8 16 3 21 6 16 6 8 1 2z" fill="#6b94c2" stroke="#39597a" /><path d="M7 3q4 7 1 13M12 4q4 5 2 9M17 6q2 3 1.500 6" stroke="#2f4f72" strokeWidth="1.200" /></> },
  { n: 'Oracle', leaf: true, i: <rect x="1.500" y="4.500" width="21" height="14.500" rx="6" fill="#6b94c2" stroke="#41607f" strokeWidth="2.200" /> },
  { n: 'DB2', leaf: true, i: <><rect x="0" y="0" width="24" height="24" rx="2" fill="#6b94c2" /><text x="1.500" y="15" textLength="21" lengthAdjust="spacingAndGlyphs" className="font-['DejaVu_Sans'] text-[8.500px]" fill="#fff">DB2</text></> },
  { n: 'WMS/WMTS', i: <World /> },
  { n: 'XYZ Tiles', i: <World /> },
  { n: 'WCS', i: <g><ellipse cx="12" cy="12" rx="11.300" ry="10" fill="#c8dcee" stroke="#2f4562" strokeWidth="1.500" /><path d="M3.500 6.500h17M3.500 17.500h17M1 12h22" stroke="#2f4f80" strokeWidth="3" /><path d="M8 9.500h8v5H8z" fill="#355f9c" /><ellipse cx="12" cy="12" rx="5" ry="10" stroke="#a9cdea" strokeWidth="1.500" /></g> },
  { n: 'WFS / OGC API - Features', i: <g><ellipse cx="12" cy="12" rx="11.300" ry="10" fill="#eef4fa" stroke="#6b94c2" strokeWidth="1.200" /><path d="M1 12h22M12 2v20M3.500 6.500h17M3.500 17.500h17" stroke="#a9cdea" /><path d="M5 5l5 13 4-12 5-1" stroke="#444" strokeWidth="1.600" /><g fill="#fff" stroke="#555" strokeWidth=".8"><circle cx="5" cy="5" r="1.500" /><circle cx="14" cy="6" r="1.500" /><circle cx="19" cy="5" r="1.500" /></g></g> },
  { n: 'OWS', i: <g><ellipse cx="12" cy="12" rx="11.300" ry="10" fill="#eef4fa" stroke="#4f86c0" strokeWidth="1.400" /><path d="M1 12h22M3.500 6.500h17M3.500 17.500h17" stroke="#8fbbe2" strokeWidth="1.200" /><ellipse cx="12" cy="12" rx="5.500" ry="10" stroke="#8fbbe2" strokeWidth="1.300" /></g> },
  { n: '', leaf: true, i: <World /> },
];

const BrowserPanel = () => (
  <div className="flex min-h-0 flex-1 flex-col">
    <div className="flex h-[7px] justify-center pt-[3px] pr-[7px]">
      <svg viewBox="0 0 17 1" className="block h-px w-[17px]"><path d="M0 .5h17" stroke="#b4b4b4" strokeDasharray="1 2" /></svg>
    </div>
    <PanelTitle name="Browser" />
    <div className="flex h-[29px] items-center pb-[3px] pl-[8px]">
      <Svg cls="h-4 w-4"><rect x="1.500" y="1.500" width="17" height="17" stroke="#777" strokeWidth="1.500" /><rect x="14.500" y="14.500" width="9" height="9" rx="2" fill="#5f8c6b" /><circle cx="19" cy="19" r="2" fill="#fff" /></Svg>
      <Svg cls="ml-[9px] h-4 w-4"><Refresh /></Svg>
      <Svg cls="ml-[9px] h-4 w-4"><Funnel /></Svg>
      <Svg cls="ml-[9px] h-4 w-4"><Tree up /></Svg>
      <Svg cls="ml-[9px] h-4 w-4"><Info /></Svg>
    </div>
    <div className="flex min-h-0 w-[327px] flex-1 overflow-hidden border border-[#b4b4b4] bg-white">
      <div className="flex-1">
        {Nodes.map((k, i) => (
          <div key={i} className="flex h-[22px] items-center pl-[10px]">
            <svg viewBox="0 0 6 10" className="mr-[12px] block h-[10px] w-[6px]">{!k.leaf && <path d="M.5.3L5.500 5 .5 9.700z" fill="#555" />}</svg>
            <Svg cls="h-5 w-5">{k.i}</Svg>
            <span className="ml-[6px] pt-[2px] text-[14.2px] leading-5 whitespace-nowrap">{k.n}</span>
          </div>
        ))}
      </div>
      <div className="flex w-[17px] flex-col border-l border-[#b4b4b4] bg-linear-to-r from-[#f2f2f2] to-[#fdfdfd]">
        <div className="flex h-[17px] items-center justify-center border-b border-[#b4b4b4] bg-[#fafafa]">
          <svg viewBox="0 0 10 6" className="block h-[6px] w-[10px]"><path d="M.5 5.500h9L5 .5z" fill="#555" /></svg>
        </div>
        <div className="flex-1" />
        <div className="h-[53px] border-y border-[#b4b4b4] bg-[#e2e2e2]" />
        <div className="flex h-[16px] items-center justify-center bg-[#fafafa]">
          <svg viewBox="0 0 10 6" className="block h-[6px] w-[10px]"><path d="M.5.5h9L5 5.500z" fill="#555" /></svg>
        </div>
      </div>
    </div>
  </div>
);

const labels = [
  { t: 'B', x: 961, y: 375.5, s: 52, w: 31, k: 5.5 },
  { t: 'A', x: 624, y: 627, s: 45, w: 28, k: 5 },
  { t: 'C', x: 941.5, y: 763.5, s: 41, w: 26, k: 4.5 },
  { t: 'B,A', x: 761, y: 494.5, s: 34, w: 50, k: 4.2 },
  { t: 'C,B', x: 962.5, y: 607.5, s: 32, w: 47, k: 4.2 },
  { t: 'C,A', x: 797, y: 702, s: 25, w: 37, k: 3.8 },
  { t: 'C,B,A', x: 841.5, y: 596.5, s: 17, w: 39, k: 3.6 },
];

const MapCanvas = () => (
  <div className="flex-1 overflow-hidden border-t border-l border-[#b4b4b4] bg-white">
    <svg viewBox="386 138 902 727" className="block h-[727px] w-[902px]">
      <defs>
        <clipPath id="ca"><circle cx="693.700" cy="592.500" r="203.800" /></clipPath>
        <clipPath id="cb"><circle cx="928" cy="411.600" r="256.500" /></clipPath>
      </defs>
      <circle cx="928" cy="411.600" r="256.500" fill="#e8a6f3" />
      <circle cx="906" cy="680" r="167.800" fill="#f565a1" />
      <circle cx="693.700" cy="592.500" r="203.800" fill="#d1da80" />
      <circle cx="906" cy="680" r="167.800" fill="#abd4ea" clipPath="url(#cb)" />
      <circle cx="928" cy="411.600" r="256.500" fill="#9e95e3" clipPath="url(#ca)" />
      <g clipPath="url(#ca)">
        <circle cx="906" cy="680" r="167.800" fill="#da8e67" />
        <circle cx="906" cy="680" r="167.800" fill="#76e4b9" clipPath="url(#cb)" />
      </g>
      <g fill="none" stroke="#232323" strokeOpacity=".7" strokeWidth="1.300">
        <circle cx="928" cy="411.600" r="256.500" /><circle cx="906" cy="680" r="167.800" /><circle cx="693.700" cy="592.500" r="203.800" />
      </g>
      {labels.map((l) => (
        <text
          key={l.t} x={l.x} y={l.y} fontSize={l.s} textLength={l.w} lengthAdjust="spacingAndGlyphs" textAnchor="middle"
          className="font-['Noto_Sans',sans-serif] font-medium" fill="#fff" stroke="#232323" strokeWidth={l.k} strokeLinejoin="round" paintOrder="stroke"
        >
          {l.t}
        </text>
      ))}
    </svg>
  </div>
);

const menu: [string, string, string, string][] = [
  ['P', 'r', 'ogetto', 'w-[73px]'], ['', 'M', 'odifica', 'w-[74px]'], ['', 'V', 'isualizza', 'w-[80px]'], ['', 'L', 'ayer', 'w-[50px]'],
  ['', 'I', 'mpostazioni', 'w-[101px]'], ['', 'P', 'lugins', 'w-[62px]'], ['Vett', 'o', 're', 'w-[63px]'], ['', 'R', 'aster', 'w-[56px]'],
  ['', 'D', 'atabase', 'w-[77px]'], ['', 'W', 'eb', 'w-[46px]'], ['', 'M', 'esh', 'w-[50px]'], ['MMQGIS', '', '', 'w-[74px]'],
  ['Pro', 'c', 'essing', 'w-[85px]'], ['', 'G', 'uida', 'w-[50px]'],
];

const Spin = () => (
  <div className="flex h-full w-[17px] flex-col items-center justify-center gap-[3px] border-l border-[#b9b9b9] bg-[#f4f4f4]">
    <svg viewBox="0 0 10 6" className="block h-[5px] w-[9px]"><path d="M.5 5.500h9L5 .5z" fill="#555" /></svg>
    <svg viewBox="0 0 10 6" className="block h-[5px] w-[9px]"><path d="M.5.5h9L5 5.500z" fill="#555" /></svg>
  </div>
);

const StatusBar = () => (
  <div className="flex h-[29px] shrink-0 items-center overflow-hidden border-t border-[#b9b9b9] bg-[#efefef] pt-[3px] font-['DejaVu_Sans_Condensed','DejaVu_Sans',sans-serif] text-[12.3px] leading-4 whitespace-nowrap text-[#111]">
    <div className="flex h-[24px] w-[309px] shrink-0 items-center rounded-[3px] border border-[#a9a9a9] bg-white pl-[8px] tracking-[0.12px] text-[#787878]">
      <svg viewBox="0 0 13 13" className="mr-[7px] block h-[13px] w-[13px]" fill="none" stroke="#8a8a8a" strokeWidth="1.400"><circle cx="5" cy="5" r="4" /><path d="M8 8l4.500 4.500" /></svg>
      Digita per localizzare (Ctrl+K)
    </div>
    <div className="ml-[47px] flex w-[36px] shrink-0 justify-end overflow-hidden">oordina</div>
    <div className="ml-[3px] flex h-[24px] w-[116px] shrink-0 items-center justify-center rounded-[3px] border border-[#b0b0b0] bg-white">960004,4182772</div>
    <svg viewBox="0 0 20 20" className="ml-[4px] block h-5 w-5 shrink-0" fill="none" stroke="#111">
      <path d="M1 5q2-4 6-3 3 0 5 4l3 5q3 2 2 5-2 3-6 3-5-1-6-5L1 10q-1-3 0-5z" fill="#222" /><path d="M3 5l5 8M6 3l5 7M9 3l3 5" stroke="#fff" strokeWidth="1.300" /><circle cx="10.500" cy="14.500" r="3.200" fill="#fff" strokeWidth="1.500" /><circle cx="10.500" cy="14.500" r="1" fill="#222" /><path d="M12 3l6-2M14 6l4-2M1 16l4-1" strokeWidth="1.400" strokeDasharray="2 1.500" />
    </svg>
    <div className="ml-[11px] flex w-[7px] shrink-0 justify-end overflow-hidden">:a</div>
    <div className="ml-[2px] flex h-[24px] w-[93px] shrink-0 items-center justify-between rounded-[3px] border border-[#b0b0b0] bg-white pl-[4px]">
      1:118963
      <div className="flex h-full w-[25px] items-center bg-[#f7f7f7] pl-[5px]"><svg viewBox="0 0 10 6" className="block h-[6px] w-[10px]"><path d="M.5.5h9L5 5.500z" fill="#555" /></svg></div>
    </div>
    <svg viewBox="0 0 16 20" className="ml-[12px] block h-5 w-4 shrink-0"><path d="M3.500 10V6a4.500 4.500 0 0 1 9 0v4" fill="none" stroke="#808080" strokeWidth="1.800" /><rect x=".5" y="9" width="15" height="10" rx="1" fill="#5e5c5e" /></svg>
    <div className="ml-[10px] w-[102px] shrink-0 overflow-hidden">nte d'ingrandimen</div>
    <div className="ml-[3px] flex h-[24px] w-[93px] shrink-0 items-center justify-between rounded-[3px] border border-[#b0b0b0] bg-white pl-[4px]">100%<Spin /></div>
    <div className="ml-[8px] flex w-[30px] shrink-0 justify-end overflow-hidden">otazio</div>
    <div className="ml-[10px] flex h-[22px] w-[89px] shrink-0 items-center justify-between rounded-[3px] border border-[#b0b0b0] bg-white pl-[4px]">0,0 °<Spin /></div>
    <div className="ml-[6px]"><Check /></div>
    <span className="ml-[6px] w-[57px] shrink-0 tracking-[0.1px]">Visualizza</span>
    <svg viewBox="0 0 20 18" className="ml-[16px] block h-[18px] w-5 shrink-0" fill="none" stroke="#eee"><ellipse cx="10" cy="9" rx="9.500" ry="8.500" fill="#6a6a6a" stroke="none" /><path d="M0 5.500h20M0 8.500h20M1 11.500h18M3 14.500h14M10 0v18" strokeWidth=".8" /><ellipse cx="10" cy="9" rx="5" ry="8.500" strokeWidth=".8" /></svg>
    <span className="ml-[4px] w-[72px] shrink-0 tracking-[0.15px]">EPSG:32632</span>
    <svg viewBox="0 0 20 19" className="ml-[19px] block h-[19px] w-5 shrink-0"><ellipse cx="10" cy="7.500" rx="9.800" ry="7.300" fill="#5e5c5e" /><path d="M11 12l7 7-1-8z" fill="#5e5c5e" /><g fill="#fff"><circle cx="5.500" cy="7.500" r="1.300" /><circle cx="10" cy="7.500" r="1.300" /><circle cx="14.500" cy="7.500" r="1.300" /></g></svg>
    <svg viewBox="0 0 8 8" className="mt-[14px] ml-[23px] block h-2 w-2 shrink-0" fill="#b4b4b4"><rect x="6" y="0" width="1" height="1" /><rect x="3" y="3" width="1" height="1" /><rect x="6" y="3" width="1" height="1" /><rect x="0" y="6" width="1" height="1" /><rect x="3" y="6" width="1" height="1" /><rect x="6" y="6" width="1" height="1" /></svg>
  </div>
);

export default function App() {
  return (
    <div className="relative flex h-[895px] w-[1288px] flex-col overflow-hidden bg-[#efefef] font-['Noto_Sans',sans-serif] text-[#111]">
      <div className="flex h-[34px] shrink-0 items-center bg-white pb-[3px] pl-[5px]">
        <svg viewBox="0 0 20 20" className="block h-5 w-5" fill="none"><circle cx="9.500" cy="9.500" r="7.300" stroke="#77a33c" strokeWidth="4.200" /><path d="M10.500 10.500h4l5 5V19h-3.500z" fill="#77a33c" stroke="#fff" strokeWidth=".7" /><path d="M8.500 8.500l4 4" stroke="#ee8a22" strokeWidth="3" /></svg>
        <span className="ml-[5px] flex-1 text-[14.25px] leading-5 text-[#8c8c8c]">*Progetto Senza Titolo - QGIS 763d4fa731</span>
        <svg viewBox="0 0 130 14" className="mr-[22px] block h-[14px] w-[130px]" fill="none" stroke="#8a8a8a"><path d="M0 6.500h12" /><rect x="58.500" y="1.500" width="11" height="11" /><path d="M117.500 1.500l11 11M128.500 1.500l-11 11" /></svg>
      </div>
      <div className="flex h-[25px] shrink-0 items-center border-b border-[#cfcfcf] pt-[1px] pl-[7px] text-[14.15px] leading-5 text-[#999]">
        {menu.map(([a, u, b, w]) => (
          <span key={a + u + b} className={`${w} shrink-0 whitespace-nowrap`}>{a}<span className="underline underline-offset-2">{u}</span>{b}</span>
        ))}
      </div>
      <MainBar />
      <div className="h-px shrink-0 bg-[#b7b7b7]" />
      <EditBar />
      <div className="h-px shrink-0 bg-[#b7b7b7]" />
      <div className="flex min-h-0 flex-1">
        <SideBar />
        <div className="flex w-[335px] shrink-0 flex-col pl-[1px]">
          <LayerPanel />
          <BrowserPanel />
        </div>
        <MapCanvas />
      </div>
      <StatusBar />
      <svg viewBox="0 0 1288 895" className="pointer-events-none absolute inset-0 h-[895px] w-[1288px]">
        <text
          transform="translate(158 783) rotate(-24.400)" dx="0 9 0 -5 -5 -1 2 -1 3 -6 -4 0 0 -2 -3" fontSize="159" fill="none" stroke="#000" strokeOpacity=".12" strokeWidth="1.400"
          className="font-['Noto_Sans',sans-serif] font-bold tracking-[-0.3px] [font-variant-ligatures:none]"
        >
          Pigrecoinfinito
        </text>
        <path d="M949 74v15l3.300-3 2 5 2.200-1-2-4.800h4.500z" fill="#000" stroke="#fff" strokeWidth=".5" />
      </svg>
    </div>
  );
}
